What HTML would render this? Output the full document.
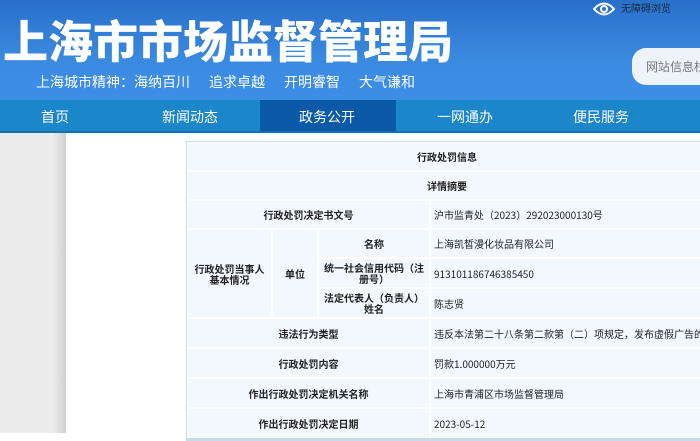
<!DOCTYPE html><html><head><meta charset="utf-8"><style>
*{margin:0;padding:0;box-sizing:border-box}
body{width:700px;height:433px;overflow:hidden;position:relative;background:#fff;font-family:"Liberation Sans","Noto Sans CJK SC",sans-serif}
.hdr{position:absolute;left:0;top:0;width:700px;height:100px;background:linear-gradient(180deg,#2a6fc9 0%,#3a8ae0 60%,#3d8fe6 100%)}
.t1{position:absolute;left:3px;top:13px;font-size:45px;font-weight:900;color:#fff;letter-spacing:0px;font-family:"Noto Sans CJK SC",sans-serif;line-height:52px}
.t2{position:absolute;left:36px;top:72px;font-size:14px;color:#fff;white-space:pre;font-family:"Noto Sans CJK SC",sans-serif}
.t2 span{margin-right:19px}
.acc{position:absolute;left:595px;top:0;font-size:10px;color:#1a2a40;font-family:"Noto Sans CJK SC",sans-serif}
.srch{position:absolute;left:632px;top:48px;width:90px;height:37px;border-radius:14px;background:#eef3f9;font-size:12px;color:#777;padding:10px 0 0 14px;font-family:"Noto Sans CJK SC",sans-serif}
.nav{position:absolute;left:0;top:100px;width:700px;height:33px;background:#1c86cb;border-bottom:2px solid #1370b5}
.nav div{position:absolute;top:7px;color:#fff;font-size:14px;font-family:"Noto Sans CJK SC",sans-serif}
.act{position:absolute;left:260px;top:100px;width:136px;height:31px;background:#0a5aa8}
.side{position:absolute;left:0;top:133px;width:66px;height:300px;background:linear-gradient(90deg,#ececec 80%,#d0d0d0 100%)}
.tb{position:absolute;left:186px;top:141px;width:520px;height:300px;background:#c8dbe8}
.c{position:absolute;background:#f2f8fe;border:1px solid #fff;font-size:10px;color:#222;display:flex;align-items:center;font-family:"Noto Sans CJK SC",sans-serif;line-height:11px}
.b{font-weight:bold;justify-content:center;text-align:center}
.v{padding-left:3px}
</style></head><body>
<div class="hdr"></div>
<div class="t1">上海市市场监督管理局</div>
<div class="t2"><span>上海城市精神：海纳百川</span><span>追求卓越</span><span>开明睿智</span><span>大气谦和</span></div>
<svg style="position:absolute;left:593px;top:1px" width="22" height="16" viewBox="0 0 22 16"><path d="M1 8 Q11 -3 21 8 Q11 19 1 8Z" fill="none" stroke="#fff" stroke-width="2"/><circle cx="11" cy="8" r="3" fill="none" stroke="#fff" stroke-width="2"/></svg>
<div class="acc" style="left:621px">无障碍浏览</div>
<div class="srch">网站信息栏</div>
<div class="nav"><div style="left:41px">首页</div><div style="left:162px">新闻动态</div><div style="left:437px">一网通办</div><div style="left:573px">便民服务</div></div>
<div class="act"></div><div style="position:absolute;left:299px;top:107px;color:#fff;font-size:14px;font-family:'Noto Sans CJK SC',sans-serif">政务公开</div>
<div class="side"></div>
<div class="tb"></div>
<div class="c b" style="left:187px;top:142px;width:520px;height:29px">行政处罚信息</div>
<div class="c b" style="left:187px;top:171px;width:520px;height:29px">详情摘要</div>
<div class="c b" style="left:187px;top:200px;width:243px;height:29px">行政处罚决定书文号</div>
<div class="c v" style="left:430px;top:200px;width:277px;height:29px">沪市监青处（2023）292023000130号</div>
<div class="c b" style="left:187px;top:229px;width:85px;height:89px">行政处罚当事人<br>基本情况</div>
<div class="c b" style="left:272px;top:229px;width:46px;height:89px">单位</div>
<div class="c b" style="left:318px;top:229px;width:112px;height:29px">名称</div>
<div class="c v" style="left:430px;top:229px;width:277px;height:29px">上海凯皙漫化妆品有限公司</div>
<div class="c b" style="left:318px;top:258px;width:112px;height:30px">统一社会信用代码（注<br>册号）</div>
<div class="c v" style="left:430px;top:258px;width:277px;height:30px">913101186746385450</div>
<div class="c b" style="left:318px;top:288px;width:112px;height:30px">法定代表人（负责人）<br>姓名</div>
<div class="c v" style="left:430px;top:288px;width:277px;height:30px">陈志贤</div>
<div class="c b" style="left:187px;top:318px;width:243px;height:30px">违法行为类型</div>
<div class="c v" style="left:430px;top:318px;width:277px;height:30px">违反本法第二十八条第二款第（二）项规定，发布虚假广告的</div>
<div class="c b" style="left:187px;top:348px;width:243px;height:30px">行政处罚内容</div>
<div class="c v" style="left:430px;top:348px;width:277px;height:30px">罚款1.000000万元</div>
<div class="c b" style="left:187px;top:378px;width:243px;height:30px">作出行政处罚决定机关名称</div>
<div class="c v" style="left:430px;top:378px;width:277px;height:30px">上海市青浦区市场监督管理局</div>
<div class="c b" style="left:187px;top:408px;width:243px;height:30px">作出行政处罚决定日期</div>
<div class="c v" style="left:430px;top:408px;width:277px;height:30px">2023-05-12</div>
</body></html>
